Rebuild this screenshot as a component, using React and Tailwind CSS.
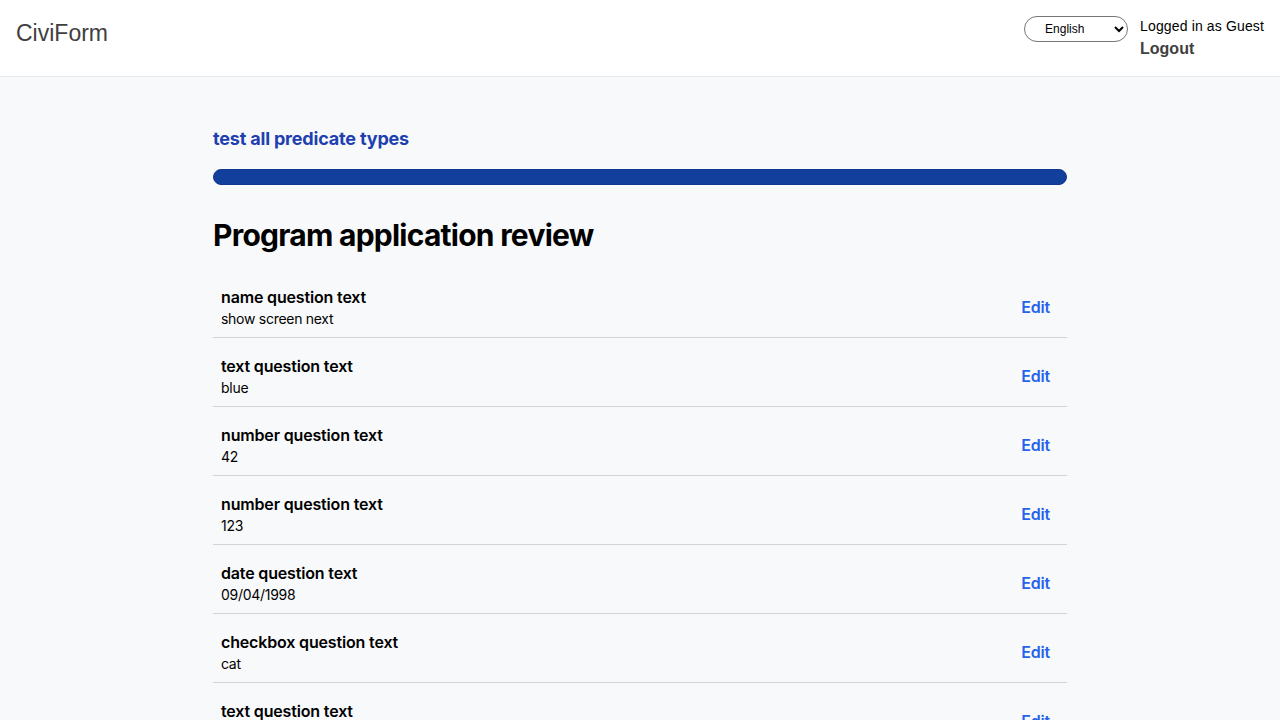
import React from "react";

const answers = [
  { question: "name question text", answer: "show screen next" },
  { question: "text question text", answer: "blue" },
  { question: "number question text", answer: "42" },
  { question: "number question text", answer: "123" },
  { question: "date question text", answer: "09/04/1998" },
  { question: "checkbox question text", answer: "cat" },
  { question: "text question text", answer: "red" },
  { question: "dropdown question text", answer: "chocolate" },
];

export default function App() {
  return (
    <div className="min-h-screen bg-[#f8f9fa] font-['Inter',sans-serif] text-black">
      {/* Top nav */}
      <nav className="h-[77px] bg-white border-b border-[#e5e7eb] flex items-start justify-between px-4">
        <div className="pt-[18px] text-[23px] leading-[30px] text-[#404040] font-['Liberation_Sans',Arial,sans-serif]">
          CiviForm
        </div>
        <div className="flex items-start gap-3 pt-4 font-['Liberation_Sans',Arial,sans-serif]">
          <select
            defaultValue="en"
            className="w-[104px] h-[26px] rounded-full border border-[#767676] bg-white text-[12px] pl-4 pr-1"
          >
            <option value="en">English</option>
            <option value="es">Español</option>
          </select>
          <div className="flex flex-col">
            <span className="text-[14px] leading-5 tracking-[0.01em] text-black">Logged in as Guest</span>
            <a href="#" className="text-[16px] leading-6 font-bold text-[#404040] mt-px">
              Logout
            </a>
          </div>
        </div>
      </nav>

      <main className="w-[854px] mx-auto pt-[48px]">
        <h2 className="text-lg leading-7 font-bold tracking-[-0.01em] text-[#1e40af]">test all predicate types</h2>
        <div className="mt-[16px] h-4 rounded-full bg-[#123f9c] border border-[#0f3a92]"></div>
        <h1 className="mt-8 text-[30px] leading-9 font-bold tracking-tight">Program application review</h1>

        <div className="mt-4">
          {answers.map((a, i) => (
            <div key={i} className="border-b border-[#d1d5db] pt-4 pb-2 px-2">
              <div className="flex items-center justify-between">
                <div>
                  <div className="text-base leading-6 font-semibold tracking-[-0.01em]">{a.question}</div>
                  <div className="text-sm leading-5 tracking-[-0.02em]">{a.answer}</div>
                </div>
                <a href="#" className="mr-[9px] text-base font-semibold tracking-[-0.01em] text-[#2563eb]">
                  Edit
                </a>
              </div>
            </div>
          ))}
        </div>
      </main>
    </div>
  );
}
